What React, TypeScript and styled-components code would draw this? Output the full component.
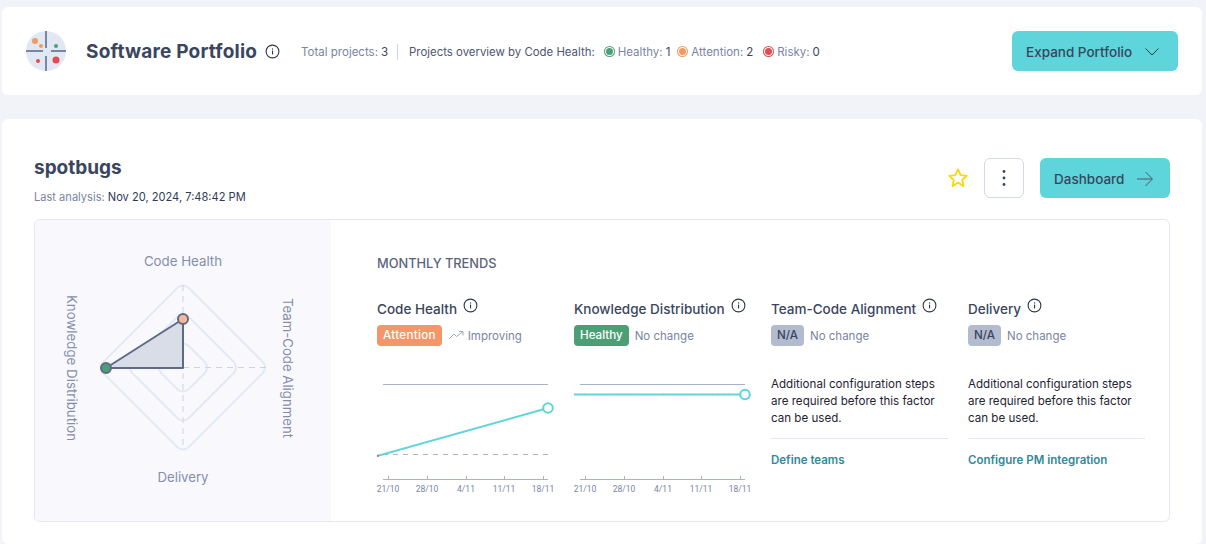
import React from "react";
import styled, { createGlobalStyle } from "styled-components";

const Global = createGlobalStyle`
  html, body { margin: 0; padding: 0; background: #f1f3f8; overflow: hidden; }
  body { font-family: "Inter", "Liberation Sans", sans-serif; color: #3a4560; }
`;

const Page = styled.div`
  width: 1206px;
  height: 544px;
  padding: 7px 4px 0 2px;
  box-sizing: border-box;
  overflow: hidden;
  display: flex;
  flex-direction: column;
  gap: 24px;
`;

const HeaderCard = styled.header`
  height: 88px;
  flex: none;
  background: #fff;
  border-radius: 6px;
  display: flex;
  align-items: center;
  padding: 0 24px;
`;

const Logo = styled.svg`
  width: 40px;
  height: 40px;
  flex: none;
`;

const PortfolioTitle = styled.h1`
  margin: 2px 0 0 20px;
  font-size: 19px;
  line-height: 24px;
  letter-spacing: 0.2px;
  font-weight: 700;
  color: #3a4560;
  white-space: nowrap;
`;

const InfoSvg = styled.svg`
  width: 15px;
  height: 15px;
  flex: none;
  display: block;
`;

const InfoWrap = styled.span<{ $left: number; $up: number }>`
  display: inline-flex;
  margin-left: ${(p) => p.$left}px;
  transform: translateY(-${(p) => p.$up}px);
`;

const Stats = styled.div`
  display: flex;
  align-items: center;
  margin-left: 21px;
  padding-top: 2px;
  font-size: 11.5px;
  color: #7a84a3;
  white-space: nowrap;
`;

const StatValue = styled.span`
  color: #3a4560;
  margin-left: 3px;
`;

const Divider = styled.span`
  width: 1px;
  height: 16px;
  background: #cdd4e4;
  margin: 0 11px 0 9px;
`;

const OverviewLabel = styled.span`
  color: #4d5672;
  font-size: 11.4px;
  margin-right: 9px;
`;

const Dot = styled.span<{ $color: string }>`
  width: 7px;
  height: 7px;
  border-radius: 50%;
  background: ${(p) => p.$color};
  box-shadow: 0 0 0 1px #fff, 0 0 0 2px ${(p) => p.$color};
  margin: 0 5px 2px 2px;
`;

const Legend = styled.span<{ $gap: number }>`
  display: inline-flex;
  align-items: center;
  margin-right: ${(p) => p.$gap}px;
`;

const ExpandButton = styled.button`
  margin-left: auto;
  width: 166px;
  height: 40px;
  border: 0;
  border-radius: 6px;
  background: #5dd5da;
  color: #3a4560;
  font: 500 13.5px "Inter", sans-serif;
  display: flex;
  align-items: center;
  justify-content: space-between;
  padding: 2px 19px 0 14px;
`;

const ProjectCard = styled.section`
  flex: 1;
  background: #fff;
  border-radius: 6px;
  padding: 37px 32px 0;
`;

const ProjectHead = styled.div`
  display: flex;
  justify-content: space-between;
  align-items: flex-start;
  height: 63px;
`;

const ProjectName = styled.h2`
  margin: 0;
  font-size: 19px;
  line-height: 24px;
  font-weight: 700;
  color: #3a4560;
`;

const Analysis = styled.div`
  margin-top: 10px;
  font-size: 11.1px;
  line-height: 14px;
  color: #7a84a3;
`;

const AnalysisDate = styled.span`
  color: #2f3a57;
`;

const Actions = styled.div`
  display: flex;
  align-items: center;
  margin-top: 2px;
`;

const MenuButton = styled.button`
  width: 40px;
  height: 40px;
  margin: 0 16px 0 15px;
  padding: 0;
  border: 1px solid #d3d9e6;
  border-radius: 6px;
  background: #fff;
  display: flex;
  align-items: center;
  justify-content: center;
`;

const DashboardButton = styled.button`
  width: 130px;
  height: 40px;
  border: 0;
  border-radius: 6px;
  background: #5dd5da;
  color: #3a4560;
  font: 500 13.5px "Inter", sans-serif;
  display: flex;
  align-items: center;
  justify-content: space-between;
  padding: 2px 17px 0 14px;
`;

const Panel = styled.div`
  height: 301px;
  border: 1px solid #e3e7f1;
  border-radius: 6px;
  display: flex;
  overflow: hidden;
`;

const RadarPane = styled.div`
  width: 296px;
  flex: none;
  background: #f9f9fd;
`;

const RadarSvg = styled.svg`
  display: block;
  width: 296px;
  height: 301px;
`;

const Trends = styled.div`
  flex: 1;
  padding: 36px 0 0 46px;
`;

const TrendsTitle = styled.h3`
  margin: 0;
  font-size: 12.8px;
  line-height: 16px;
  font-weight: 500;
  color: #5a6480;
`;

const Columns = styled.div`
  display: grid;
  grid-template-columns: repeat(4, 177px);
  gap: 20px;
  margin-top: 28px;
`;

const Column = styled.div`
  display: flex;
  flex-direction: column;
`;

const FactorTitle = styled.div`
  display: flex;
  font-size: 13.5px;
  line-height: 18px;
  font-weight: 500;
  color: #3a4560;
  white-space: nowrap;
`;

const StatusRow = styled.div`
  display: flex;
  align-items: center;
  margin-top: 7px;
  height: 21px;
  font-size: 11.5px;
  color: #7a84a3;
`;

const Badge = styled.span<{ $bg: string; $fg: string; $spacing?: number }>`
  height: 21px;
  padding: 0 6px;
  border-radius: 4px;
  background: ${(p) => p.$bg};
  color: ${(p) => p.$fg};
  font-size: 11.6px;
  font-weight: 500;
  line-height: 21px;
  letter-spacing: ${(p) => p.$spacing ?? 0}px;
  margin-right: 6px;
`;

const TrendIcon = styled.svg`
  width: 15px;
  height: 15px;
  margin: 0 4px 0 1px;
`;

const Chart = styled.svg`
  display: block;
  width: 182px;
  height: 128px;
  margin-top: 29px;
`;

const Note = styled.p`
  margin: 30px 0 0;
  font-size: 11.6px;
  line-height: 17px;
  color: #1f2433;
  padding-bottom: 11px;
  border-bottom: 1px solid #e3e7f1;
`;

const ActionLink = styled.a`
  margin-top: 14px;
  font-size: 11.5px;
  line-height: 14px;
  font-weight: 600;
  color: #33899a;
`;

const Info = ({ left = 6, up = 2 }: { left?: number; up?: number }) => (
  <InfoWrap $left={left} $up={up}>
    <InfoSvg viewBox="0 0 15 15" fill="none">
      <circle cx="7.5" cy="7.5" r="6.4" stroke="#2f3648" strokeWidth="1.1" />
      <rect x="7" y="6.6" width="1.1" height="3.8" fill="#2f3648" />
      <rect x="7" y="4.4" width="1.1" height="1.2" fill="#2f3648" />
    </InfoSvg>
  </InfoWrap>
);

const ticks = [11, 50, 89, 127, 166];
const labels = ["21/10", "28/10", "4/11", "11/11", "18/11"];
const flatMarks = [11, 50, 89, 128, 133, 139, 144, 150, 155];

const TrendChart = ({ healthy }: { healthy?: boolean }) => (
  <Chart viewBox="0 0 182 128" fill="none">
    <line x1="6" x2="171" y1="9.5" y2="9.5" stroke="#aab2c8" />
    <line x1="6" x2="171" y1="104.5" y2="104.5" stroke="#aab2c8" />
    {ticks.map((t) => (
      <line key={t} x1={t + 0.5} x2={t + 0.5} y1="104" y2="101" stroke="#aab2c8" />
    ))}
    {labels.map((l, i) => (
      <text key={l} x={ticks[i]} y="117" fontSize="8.5" fill="#7a84a3" textAnchor="middle" fontFamily="Roboto, sans-serif">
        {l}
      </text>
    ))}
    {healthy ? (
      <>
        <line x1="0" x2="171" y1="19.5" y2="19.5" stroke="#5dd5da" strokeWidth="2" />
        {flatMarks.map((m) => (
          <circle key={m} cx={m} cy="19.5" r="1" fill="#8ccbd2" />
        ))}
        <circle cx="171" cy="19.5" r="4.8" fill="#fff" stroke="#5dd5da" strokeWidth="2" />
      </>
    ) : (
      <>
        <line x1="6" x2="171" y1="79.5" y2="79.5" stroke="#aab2c8" strokeDasharray="5 5" />
        <line x1="0" x2="171" y1="81" y2="33" stroke="#5dd5da" strokeWidth="2" />
        <circle cx="0.8" cy="80.8" r="1" fill="#e14b52" />
        <circle cx="171" cy="33" r="4.8" fill="#fff" stroke="#5dd5da" strokeWidth="2" />
      </>
    )}
  </Chart>
);

const diamonds = [82, 53, 24];
const RADAR_X = 148;
const RADAR_Y = 147.5;
const RADIUS = 8;

const Radar = () => (
  <RadarSvg viewBox="0 0 296 301" fill="none">
    {diamonds.map((e) => {
      const s = (e + RADIUS * (Math.SQRT2 - 1)) * Math.SQRT2;
      return (
        <rect
          key={e}
          x={RADAR_X - s / 2}
          y={RADAR_Y - s / 2}
          width={s}
          height={s}
          rx={RADIUS}
          stroke="#e2e8f5"
          strokeWidth="2"
          transform={`rotate(45 ${RADAR_X} ${RADAR_Y})`}
        />
      );
    })}
    <line x1={RADAR_X} x2={RADAR_X} y1="65" y2="230" stroke="#ccd3e3" strokeDasharray="6 5" />
    <line x1={RADAR_X} x2="231" y1={RADAR_Y} y2={RADAR_Y} stroke="#ccd3e3" strokeDasharray="6 5" />
    <path d="M71 148 L148 99 L148 148 Z" fill="#d9dde8" stroke="#5e6a88" strokeWidth="2" strokeLinejoin="round" />
    <circle cx="148" cy="99" r="5" fill="#f9b797" stroke="#5e6a88" strokeWidth="2" />
    <circle cx="71" cy="148" r="5" fill="#4c9f75" stroke="#5e6a88" strokeWidth="2" />
    <text x="148" y="46" fontSize="13.3" fill="#858ea9" textAnchor="middle" fontFamily="Inter, sans-serif">Code Health</text>
    <text x="148" y="262" fontSize="13.2" fill="#858ea9" textAnchor="middle" fontFamily="Inter, sans-serif">Delivery</text>
    <text transform="translate(32 148) rotate(90)" fontSize="13.3" fill="#858ea9" textAnchor="middle" fontFamily="Inter, sans-serif">Knowledge Distribution</text>
    <text transform="translate(248 148) rotate(90)" fontSize="13.2" fill="#858ea9" textAnchor="middle" fontFamily="Inter, sans-serif">Team-Code Alignment</text>
  </RadarSvg>
);

export default function App() {
  return (
    <Page>
      <Global />
      <HeaderCard>
        <Logo viewBox="0 0 40 40" fill="none">
          <circle cx="20" cy="20" r="20" fill="#e2e8f3" />
          <path d="M20 0v17M20 25v15M0 20h17M25 20h15" stroke="#7a87a3" strokeWidth="2" />
          <circle cx="9" cy="10" r="3" fill="#f3995f" />
          <circle cx="15" cy="15" r="2" fill="#f3995f" />
          <circle cx="30" cy="15" r="2" fill="#4c9f75" />
          <circle cx="12" cy="30" r="2" fill="#e14b52" />
          <circle cx="30" cy="29" r="3.5" fill="#e14b52" />
        </Logo>
        <PortfolioTitle>Software Portfolio</PortfolioTitle>
        <Info left={8} up={0} />
        <Stats>
          Total projects:<StatValue>3</StatValue>
          <Divider />
          <OverviewLabel>Projects overview by Code Health:</OverviewLabel>
          <Legend $gap={7}>
            <Dot $color="#4c9f75" />Healthy:<StatValue>1</StatValue>
          </Legend>
          <Legend $gap={10}>
            <Dot $color="#f3995f" />Attention:<StatValue>2</StatValue>
          </Legend>
          <Legend $gap={0}>
            <Dot $color="#e14b52" />Risky:<StatValue>0</StatValue>
          </Legend>
        </Stats>
        <ExpandButton>
          Expand Portfolio
          <svg width="14" height="8" viewBox="0 0 14 8" fill="none">
            <path d="M0.5 0.5l6.5 6.5 6.5-6.5" stroke="#1f2433" strokeWidth="0.9" />
          </svg>
        </ExpandButton>
      </HeaderCard>
      <ProjectCard>
        <ProjectHead>
          <div>
            <ProjectName>spotbugs</ProjectName>
            <Analysis>
              Last analysis: <AnalysisDate>Nov 20, 2024, 7:48:42 PM</AnalysisDate>
            </Analysis>
          </div>
          <Actions>
            <svg width="22" height="22" viewBox="0 0 24 24" fill="none">
              <path d="M12 2.6l2.9 6.2 6.7.8-5 4.6 1.4 6.7L12 17l-6 3.9 1.4-6.7-5-4.6 6.7-.8z" stroke="#ffd60a" strokeWidth="2" strokeLinejoin="round" />
            </svg>
            <MenuButton aria-label="Menu">
              <svg width="4" height="18" viewBox="0 0 4 18" fill="#3a4560">
                <circle cx="2" cy="2.5" r="1.4" />
                <circle cx="2" cy="9" r="1.4" />
                <circle cx="2" cy="15.5" r="1.4" />
              </svg>
            </MenuButton>
            <DashboardButton>
              Dashboard
              <svg width="16" height="16" viewBox="0 0 16 16" fill="none">
                <path d="M0 8h15M8.5 1l7 7-7 7" stroke="#4d5672" strokeWidth="1" />
              </svg>
            </DashboardButton>
          </Actions>
        </ProjectHead>
        <Panel>
          <RadarPane>
            <Radar />
          </RadarPane>
          <Trends>
            <TrendsTitle>MONTHLY TRENDS</TrendsTitle>
            <Columns>
              <Column>
                <FactorTitle>Code Health<Info /></FactorTitle>
                <StatusRow>
                  <Badge $bg="#f5956a" $fg="#fff" $spacing={0.3}>Attention</Badge>
                  <TrendIcon viewBox="0 0 15 15" fill="none">
                    <path d="M0 11l5-5 2.5 2.5L13.5 4M10 3.5h4v4" stroke="#8a93ad" strokeWidth="0.8" />
                  </TrendIcon>
                  Improving
                </StatusRow>
                <TrendChart />
              </Column>
              <Column>
                <FactorTitle>Knowledge Distribution<Info /></FactorTitle>
                <StatusRow>
                  <Badge $bg="#4c9f75" $fg="#fff">Healthy</Badge>
                  No change
                </StatusRow>
                <TrendChart healthy />
              </Column>
              <Column>
                <FactorTitle>Team-Code Alignment<Info /></FactorTitle>
                <StatusRow>
                  <Badge $bg="#b3bccf" $fg="#3a4560">N/A</Badge>
                  No change
                </StatusRow>
                <Note>Additional configuration steps are required before this factor can be used.</Note>
                <ActionLink>Define teams</ActionLink>
              </Column>
              <Column>
                <FactorTitle>Delivery<Info /></FactorTitle>
                <StatusRow>
                  <Badge $bg="#b3bccf" $fg="#3a4560">N/A</Badge>
                  No change
                </StatusRow>
                <Note>Additional configuration steps are required before this factor can be used.</Note>
                <ActionLink>Configure PM integration</ActionLink>
              </Column>
            </Columns>
          </Trends>
        </Panel>
      </ProjectCard>
    </Page>
  );
}
